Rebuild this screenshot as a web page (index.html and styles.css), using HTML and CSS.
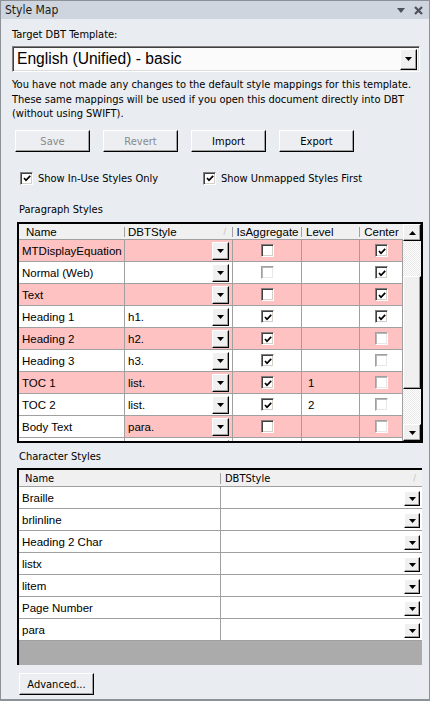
FILE: index.html
```html
<!DOCTYPE html>
<html>
<head>
<meta charset="utf-8">
<link rel="stylesheet" href="styles.css">
</head>
<body>
<div class="window">
  <div class="titlebar">
    <span class="title">Style Map</span>
    <span class="tb-icons">
      <svg class="tb-tri" width="8" height="5" viewBox="0 0 8 5"><polygon points="0,0 8,0 4,5" fill="#4d5159"/></svg>
      <svg class="tb-x" width="9" height="9" viewBox="0 0 9 9"><path d="M1 1 L8 8 M8 1 L1 8" stroke="#4d5159" stroke-width="2.2"/></svg>
    </span>
  </div>
  <div class="content">
    <div class="label lbl-template">Target DBT Template:</div>
    <div class="combo">
      <span class="combo-text">English (Unified) - basic</span>
      <span class="combo-btn"><svg width="7" height="4" viewBox="0 0 7 4"><polygon points="0,0 7,0 3.5,4" fill="#000"/></svg></span>
    </div>
    <div class="desc">You have not made any changes to the default style mappings for this template.<br>These same mappings will be used if you open this document directly into DBT<br>(without using SWIFT).</div>
    <div class="buttons">
      <div class="btn disabled">Save</div>
      <div class="btn disabled">Revert</div>
      <div class="btn">Import</div>
      <div class="btn">Export</div>
    </div>
    <div class="checks">
      <div class="check-item ci-1"><span class="cb on"><svg width="8" height="7" viewBox="0 0 8 7"><polyline points="1,3 3,5.3 7.2,0.8" fill="none" stroke="#000" stroke-width="1.7"/></svg></span><span>Show In-Use Styles Only</span></div>
      <div class="check-item ci-2"><span class="cb on"><svg width="8" height="7" viewBox="0 0 8 7"><polyline points="1,3 3,5.3 7.2,0.8" fill="none" stroke="#000" stroke-width="1.7"/></svg></span><span>Show Unmapped Styles First</span></div>
    </div>
    <div class="label section-label sl-para">Paragraph Styles</div>
    <div class="pgrid">
      <div class="pgrid-main">
        <div class="prow phead">
          <div class="pc c-name"><span>Name</span></div>
          <div class="pc c-dbt"><span>DBTStyle</span><span class="sortmark">/</span></div>
          <div class="pc c-agg"><span>IsAggregate</span></div>
          <div class="pc c-lvl"><span>Level</span></div>
          <div class="pc c-ctr"><span>Center</span></div>
        </div>
        <div class="prow pink">
          <div class="pc c-name">MTDisplayEquation</div>
          <div class="pc c-dbt"><span></span><span class="dd"><svg width="7" height="4" viewBox="0 0 7 4"><polygon points="0,0 7,0 3.5,4"/></svg></span></div>
          <div class="pc c-agg"><span class="cb"></span></div>
          <div class="pc c-lvl"></div>
          <div class="pc c-ctr"><span class="cb on"><svg width="8" height="7" viewBox="0 0 8 7"><polyline points="1,3 3,5.3 7.2,0.8" fill="none" stroke="#000" stroke-width="1.7"/></svg></span></div>
        </div>
        <div class="prow">
          <div class="pc c-name">Normal (Web)</div>
          <div class="pc c-dbt"><span></span><span class="dd"><svg width="7" height="4" viewBox="0 0 7 4"><polygon points="0,0 7,0 3.5,4"/></svg></span></div>
          <div class="pc c-agg"><span class="cb light"></span></div>
          <div class="pc c-lvl"></div>
          <div class="pc c-ctr"><span class="cb on"><svg width="8" height="7" viewBox="0 0 8 7"><polyline points="1,3 3,5.3 7.2,0.8" fill="none" stroke="#000" stroke-width="1.7"/></svg></span></div>
        </div>
        <div class="prow pink">
          <div class="pc c-name">Text</div>
          <div class="pc c-dbt"><span></span><span class="dd"><svg width="7" height="4" viewBox="0 0 7 4"><polygon points="0,0 7,0 3.5,4"/></svg></span></div>
          <div class="pc c-agg"><span class="cb"></span></div>
          <div class="pc c-lvl"></div>
          <div class="pc c-ctr"><span class="cb on"><svg width="8" height="7" viewBox="0 0 8 7"><polyline points="1,3 3,5.3 7.2,0.8" fill="none" stroke="#000" stroke-width="1.7"/></svg></span></div>
        </div>
        <div class="prow">
          <div class="pc c-name">Heading 1</div>
          <div class="pc c-dbt"><span>h1.</span><span class="dd"><svg width="7" height="4" viewBox="0 0 7 4"><polygon points="0,0 7,0 3.5,4"/></svg></span></div>
          <div class="pc c-agg"><span class="cb on"><svg width="8" height="7" viewBox="0 0 8 7"><polyline points="1,3 3,5.3 7.2,0.8" fill="none" stroke="#000" stroke-width="1.7"/></svg></span></div>
          <div class="pc c-lvl"></div>
          <div class="pc c-ctr"><span class="cb on"><svg width="8" height="7" viewBox="0 0 8 7"><polyline points="1,3 3,5.3 7.2,0.8" fill="none" stroke="#000" stroke-width="1.7"/></svg></span></div>
        </div>
        <div class="prow pink">
          <div class="pc c-name">Heading 2</div>
          <div class="pc c-dbt"><span>h2.</span><span class="dd"><svg width="7" height="4" viewBox="0 0 7 4"><polygon points="0,0 7,0 3.5,4"/></svg></span></div>
          <div class="pc c-agg"><span class="cb on"><svg width="8" height="7" viewBox="0 0 8 7"><polyline points="1,3 3,5.3 7.2,0.8" fill="none" stroke="#000" stroke-width="1.7"/></svg></span></div>
          <div class="pc c-lvl"></div>
          <div class="pc c-ctr"><span class="cb light"></span></div>
        </div>
        <div class="prow">
          <div class="pc c-name">Heading 3</div>
          <div class="pc c-dbt"><span>h3.</span><span class="dd"><svg width="7" height="4" viewBox="0 0 7 4"><polygon points="0,0 7,0 3.5,4"/></svg></span></div>
          <div class="pc c-agg"><span class="cb on"><svg width="8" height="7" viewBox="0 0 8 7"><polyline points="1,3 3,5.3 7.2,0.8" fill="none" stroke="#000" stroke-width="1.7"/></svg></span></div>
          <div class="pc c-lvl"></div>
          <div class="pc c-ctr"><span class="cb light"></span></div>
        </div>
        <div class="prow pink">
          <div class="pc c-name">TOC 1</div>
          <div class="pc c-dbt"><span>list.</span><span class="dd"><svg width="7" height="4" viewBox="0 0 7 4"><polygon points="0,0 7,0 3.5,4"/></svg></span></div>
          <div class="pc c-agg"><span class="cb on"><svg width="8" height="7" viewBox="0 0 8 7"><polyline points="1,3 3,5.3 7.2,0.8" fill="none" stroke="#000" stroke-width="1.7"/></svg></span></div>
          <div class="pc c-lvl">1</div>
          <div class="pc c-ctr"><span class="cb light"></span></div>
        </div>
        <div class="prow">
          <div class="pc c-name">TOC 2</div>
          <div class="pc c-dbt"><span>list.</span><span class="dd"><svg width="7" height="4" viewBox="0 0 7 4"><polygon points="0,0 7,0 3.5,4"/></svg></span></div>
          <div class="pc c-agg"><span class="cb on"><svg width="8" height="7" viewBox="0 0 8 7"><polyline points="1,3 3,5.3 7.2,0.8" fill="none" stroke="#000" stroke-width="1.7"/></svg></span></div>
          <div class="pc c-lvl">2</div>
          <div class="pc c-ctr"><span class="cb light"></span></div>
        </div>
        <div class="prow pink">
          <div class="pc c-name white">Body Text</div>
          <div class="pc c-dbt"><span>para.</span><span class="dd"><svg width="7" height="4" viewBox="0 0 7 4"><polygon points="0,0 7,0 3.5,4"/></svg></span></div>
          <div class="pc c-agg"><span class="cb"></span></div>
          <div class="pc c-lvl"></div>
          <div class="pc c-ctr"><span class="cb light"></span></div>
        </div>
        <div class="prow">
          <div class="pc c-name"></div>
          <div class="pc c-dbt"><span></span><span class="dd"><svg width="7" height="4" viewBox="0 0 7 4"><polygon points="0,0 7,0 3.5,4"/></svg></span></div>
          <div class="pc c-agg"><span class="cb"></span></div>
          <div class="pc c-lvl"></div>
          <div class="pc c-ctr"><span class="cb light"></span></div>
        </div>
      </div>
      <div class="vscroll">
        <div class="sb-btn"><svg width="7" height="4" viewBox="0 0 7 4"><polygon points="0,4 7,4 3.5,0"/></svg></div>
        <div class="sb-track t1"></div>
        <div class="sb-thumb"></div>
        <div class="sb-track t2"></div>
        <div class="sb-btn"><svg width="7" height="4" viewBox="0 0 7 4"><polygon points="0,0 7,0 3.5,4"/></svg></div>
      </div>
    </div>
    <div class="label section-label sl-char">Character Styles</div>
    <div class="cgrid">
      <div class="crow chead">
        <div class="cc cc-name"><span>Name</span></div>
        <div class="cc cc-dbt"><span>DBTStyle</span><span class="sortmark">/</span></div>
      </div>
      <div class="crow"><div class="cc cc-name">Braille</div><div class="cc cc-dbt"><span class="dd"><svg width="7" height="4" viewBox="0 0 7 4"><polygon points="0,0 7,0 3.5,4"/></svg></span></div></div>
      <div class="crow"><div class="cc cc-name">brlinline</div><div class="cc cc-dbt"><span class="dd"><svg width="7" height="4" viewBox="0 0 7 4"><polygon points="0,0 7,0 3.5,4"/></svg></span></div></div>
      <div class="crow"><div class="cc cc-name">Heading 2 Char</div><div class="cc cc-dbt"><span class="dd"><svg width="7" height="4" viewBox="0 0 7 4"><polygon points="0,0 7,0 3.5,4"/></svg></span></div></div>
      <div class="crow"><div class="cc cc-name">listx</div><div class="cc cc-dbt"><span class="dd"><svg width="7" height="4" viewBox="0 0 7 4"><polygon points="0,0 7,0 3.5,4"/></svg></span></div></div>
      <div class="crow"><div class="cc cc-name">litem</div><div class="cc cc-dbt"><span class="dd"><svg width="7" height="4" viewBox="0 0 7 4"><polygon points="0,0 7,0 3.5,4"/></svg></span></div></div>
      <div class="crow"><div class="cc cc-name">Page Number</div><div class="cc cc-dbt"><span class="dd"><svg width="7" height="4" viewBox="0 0 7 4"><polygon points="0,0 7,0 3.5,4"/></svg></span></div></div>
      <div class="crow"><div class="cc cc-name">para</div><div class="cc cc-dbt"><span class="dd"><svg width="7" height="4" viewBox="0 0 7 4"><polygon points="0,0 7,0 3.5,4"/></svg></span></div></div>
      <div class="cgrid-empty"></div>
    </div>
    <div class="btn btn-adv">Advanced...</div>
  </div>
</div>
</body>
</html>
```

FILE: styles.css
```css
html, body {
  margin: 0;
  padding: 0;
  background: #e9ecf0;
}
.window {
  width: 430px;
  height: 701px;
  box-sizing: border-box;
  border: 1px solid #8d9299;
  border-bottom-width: 2px;
  background: #e9ecf0;
  font-family: "DejaVu Sans Condensed", "Liberation Sans", sans-serif;
  font-size: 11px;
  color: #000;
  overflow: hidden;
}
.titlebar {
  height: 18px;
  background: #cfd5de;
  display: flex;
  align-items: center;
  justify-content: space-between;
  padding: 0 6px 0 4px;
}
.title {
  font-size: 12px;
  color: #1a1a1a;
}
.tb-icons {
  display: flex;
  align-items: center;
  gap: 9px;
}
.content {
  padding-left: 11px;
  display: flex;
  flex-direction: column;
  align-items: flex-start;
}
.label {
  line-height: 14px;
  height: 14px;
}
.lbl-template { margin-top: 9px; }
.combo {
  margin-top: 4px;
  width: 408px;
  height: 26px;
  box-sizing: border-box;
  border: 1px solid;
  border-color: #808080 #ffffff #ffffff #808080;
  box-shadow: inset 1px 1px 0 #404040, inset -1px -1px 0 #dcdcdc;
  background: #fbfbfb;
  display: flex;
  align-items: center;
  justify-content: space-between;
  padding: 0 2px 0 4px;
}
.combo-text {
  font-family: "Liberation Sans", Arial, sans-serif;
  font-size: 15.6px;
}
.combo-btn, .dd, .sb-btn {
  box-sizing: border-box;
  display: flex;
  align-items: center;
  justify-content: center;
  background: #f0f0f0;
  border: 1px solid;
  border-color: #ffffff #000000 #000000 #ffffff;
  box-shadow: inset -1px -1px 0 #a0a0a0;
}
.combo-btn {
  width: 17px;
  height: 21px;
}
.desc {
  margin-top: 6px;
  line-height: 14.5px;
  height: 44px;
  white-space: nowrap;
}
.buttons {
  margin-top: 8px;
  margin-left: 3px;
  display: flex;
  gap: 13px;
}
.btn {
  width: 75px;
  height: 22px;
  box-sizing: border-box;
  border: 1px solid;
  border-color: #ffffff #000000 #000000 #ffffff;
  box-shadow: inset -1px -1px 0 #a0a0a0;
  background: #eceef2;
  display: flex;
  align-items: center;
  justify-content: center;
}
.btn.disabled { color: #8a8a8a; }
.checks {
  margin-top: 19px;
  margin-left: 8px;
  display: flex;
  height: 14px;
  align-items: center;
}
.check-item {
  display: flex;
  align-items: center;
  gap: 5px;
}
.ci-1 { width: 183px; }
.cb {
  width: 13px;
  height: 13px;
  box-sizing: border-box;
  background: #fff;
  border: 1px solid;
  border-color: #808080 #ffffff #ffffff #808080;
  box-shadow: inset 1px 1px 0 #404040, inset -1px -1px 0 #d4d0c8;
  display: inline-flex;
  align-items: center;
  justify-content: center;
  flex: none;
}
.cb.light {
  border-color: #a0a0a0 #ffffff #ffffff #a0a0a0;
  box-shadow: inset 1px 1px 0 #b8b8b8, inset -1px -1px 0 #e8e8e8;
}
.cb svg { margin-left: 1px; margin-top: 1px; }
.section-label { margin-left: 7px; }
.sl-para { margin-top: 18px; }
.sl-char { margin-top: 7px; }

/* paragraph grid */
.pgrid {
  margin-top: 5px;
  margin-left: 5px;
  width: 406px;
  height: 221px;
  box-sizing: border-box;
  border: 2px solid #000;
  display: flex;
  overflow: hidden;
  background: #fff;
}
.pgrid-main {
  width: 384px;
  overflow: hidden;
  font-family: "Liberation Sans", Arial, sans-serif;
  font-size: 11.5px;
}
.prow {
  display: flex;
  height: 22px;
  background: #fff;
}
.prow.pink { background: #ffc2c2; }
.pc {
  box-sizing: border-box;
  border-right: 1px solid #a0a0a0;
  border-bottom: 1px solid #a0a0a0;
  display: flex;
  align-items: center;
  padding-left: 3px;
}
.pc.white { background: #fff; }
.c-name { width: 106px; }
.c-dbt { width: 108px; justify-content: space-between; padding-right: 3px; }
.c-agg { width: 69px; justify-content: center; padding-left: 0; }
.c-lvl { width: 58px; padding-left: 6px; }
.c-ctr { width: 43px; justify-content: center; padding-left: 0; }
.phead {
  height: 16px;
  background: #f0f0f0;
}
.phead .pc {
  border-right: none;
  border-bottom: 1px solid #a0a0a0;
  position: relative;
}
.phead .c-name, .phead .c-dbt, .phead .c-agg, .phead .c-lvl {
  background-image: linear-gradient(#a0a0a0, #a0a0a0);
  background-size: 1px 10px;
  background-position: right center;
  background-repeat: no-repeat;
}
.phead .c-name span { padding-left: 4px; }
.phead .c-agg, .phead .c-ctr { justify-content: center; }
.phead .c-lvl { padding-left: 4px; }
.sortmark {
  color: #c0c0c0;
  font-size: 9px;
  padding-right: 4px;
}
.dd {
  width: 17px;
  height: 18px;
  margin-top: 1px;
}
.dd svg { fill: #000; }
.vscroll {
  width: 18px;
  display: flex;
  flex-direction: column;
}
.sb-btn {
  width: 18px;
  height: 17px;
  flex: none;
}
.sb-btn svg { fill: #000; }
.sb-track {
  background: repeating-conic-gradient(#ffffff 0 25%, #e8e8e8 0 50%) 0 0 / 2px 2px;
}
.t1 { height: 35px; }
.t2 { height: 35px; }
.sb-thumb {
  height: 113px;
  box-sizing: border-box;
  background: #f0f0f0;
  border: 1px solid;
  border-color: #ffffff #000000 #000000 #ffffff;
  box-shadow: inset -1px -1px 0 #a0a0a0;
}

/* character grid */
.cgrid {
  margin-top: 4px;
  margin-left: 5px;
  width: 405px;
  height: 197px;
  box-sizing: border-box;
  border-top: 2px solid #000;
  border-left: 2px solid #000;
  display: flex;
  flex-direction: column;
  background: #fff;
  font-family: "Liberation Sans", Arial, sans-serif;
  font-size: 11.5px;
}
.crow {
  display: flex;
  height: 22px;
  flex: none;
}
.cc {
  box-sizing: border-box;
  border-bottom: 1px solid #a0a0a0;
  display: flex;
  align-items: center;
  padding-left: 3px;
}
.cc-name { width: 202px; border-right: 1px solid #a0a0a0; }
.cc-dbt { width: 201px; justify-content: flex-end; padding-right: 2px; align-items: flex-end; padding-bottom: 2px; }
.cc-dbt .dd { width: 16px; height: 15px; }
.chead {
  height: 17px;
  background: #f0f0f0;
  font-family: "DejaVu Sans Condensed", "Liberation Sans", sans-serif;
  font-size: 11px;
}
.chead .cc { align-items: center; padding-bottom: 0; }
.chead .cc-name { border-right: none; background-image: linear-gradient(#a0a0a0, #a0a0a0); background-size: 1px 11px; background-position: right center; background-repeat: no-repeat; }
.chead .cc-name span { padding-left: 3px; }
.chead .cc-dbt { justify-content: space-between; padding-left: 4px; }
.cgrid-empty {
  flex: 1;
  background: #ababab;
}
.btn-adv {
  margin-top: 8px;
  margin-left: 7px;
  width: 75px;
}
```
